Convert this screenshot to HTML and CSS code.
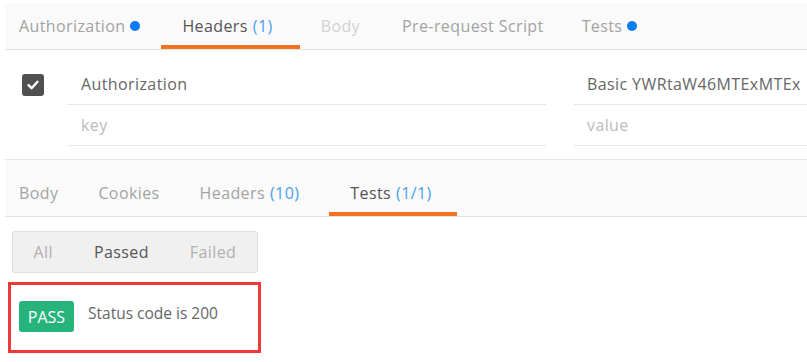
FILE: index.html
```html
<!DOCTYPE html>
<html lang="en">
<head>
  <meta charset="UTF-8" />
  <title>Request / Response Tests</title>
  <link rel="stylesheet" href="styles.css">
</head>
<body>
  <!-- request tabs -->
  <div class="tabbar request-tabs">
    <div class="tab">Authorization <span class="dot"></span></div>
    <div class="tab active">Headers <span class="count">(1)</span></div>
    <div class="tab disabled">Body</div>
    <div class="tab">Pre-request Script</div>
    <div class="tab">Tests <span class="dot"></span></div>
  </div>

  <div class="header-rows">
    <div class="row">
      <div class="check-cell"><span class="checkbox">
        <svg width="14" height="14" viewBox="0 0 14 14"><path d="M2.5 7.2 L5.6 10.2 L11.5 3.8" fill="none" stroke="#fff" stroke-width="2.4" stroke-linecap="round" stroke-linejoin="round"/></svg>
      </span></div>
      <div class="cell key">Authorization</div>
      <div class="spacer"></div>
      <div class="cell value">Basic YWRtaW46MTExMTEx</div>
    </div>
    <div class="row">
      <div class="check-cell"></div>
      <div class="cell key placeholder">key</div>
      <div class="spacer"></div>
      <div class="cell value placeholder">value</div>
    </div>
  </div>

  <!-- response tabs -->
  <div class="tabbar response-tabs">
    <div class="tab">Body</div>
    <div class="tab">Cookies</div>
    <div class="tab">Headers <span class="count">(10)</span></div>
    <div class="tab active">Tests <span class="count">(1/1)</span></div>
  </div>

  <div class="filters">
    <span class="filter">All</span>
    <span class="filter selected">Passed</span>
    <span class="filter">Failed</span>
  </div>

  <div class="results">
    <div class="result">
      <span class="badge">PASS</span>
      <span class="result-name">Status code is 200</span>
    </div>
  </div>
</body>
</html>
```

FILE: styles.css
```css
body {
  margin: 0;
  font-family: 'Open Sans', 'Noto Sans', sans-serif;
  font-size: 16px;
  letter-spacing: 0.4px;
  color: #505050;
  background: #ffffff;
}
.tabbar {
  display: flex;
  margin-left: 5px;
  background: #fafafa;
  border-bottom: 1px solid #e2e2e2;
}
.request-tabs {
  margin-top: 3px;
  height: 46px;
}
.response-tabs {
  height: 46px;
  padding-top: 10px;
  border-top: 1px solid #e6e6e6;
  margin-top: 13px;
}
.tab {
  position: relative;
  display: flex;
  align-items: center;
  gap: 5px;
  padding: 0 21px;
  color: #a3a3a3;
  white-space: nowrap;
}
.request-tabs .tab:first-child {
  padding-left: 14px;
}
.request-tabs .tab.active {
  padding-right: 27px;
}
.request-tabs .tab:last-child {
  margin-left: -4px;
}
.response-tabs .tab {
  padding: 0 20px;
}
.response-tabs .tab:first-child {
  padding-left: 14px;
}
.response-tabs .tab.active {
  margin-left: 10px;
  padding: 0 25px 0 21px;
}
.tab.active {
  color: #555555;
}
.tab.active::after {
  content: "";
  position: absolute;
  left: 0;
  right: 0;
  bottom: 0;
  height: 4px;
  background: #f47023;
}
.tab.disabled {
  color: #d2d2d2;
}
.count {
  color: #4a9ef2;
}
.dot {
  width: 10px;
  height: 10px;
  border-radius: 50%;
  background: #0d7cf0;
}

.header-rows {
  padding-top: 14px;
}
.row {
  display: flex;
  height: 41px;
}
.check-cell {
  width: 67px;
  display: flex;
  align-items: center;
  padding-left: 22px;
  box-sizing: border-box;
}
.checkbox {
  width: 22px;
  height: 22px;
  border-radius: 3px;
  background: #505050;
  display: flex;
  align-items: center;
  justify-content: center;
}
.cell {
  display: flex;
  align-items: center;
  border-bottom: 1px solid #e8e8e8;
  color: #666666;
}
.cell.key {
  width: 479px;
  padding-left: 14px;
  box-sizing: border-box;
}
.spacer {
  width: 28px;
}
.cell.value {
  flex: 1;
  padding-left: 13px;
  white-space: nowrap;
  overflow: hidden;
}
.placeholder {
  color: #bbbbbb;
}

.filters {
  display: inline-flex;
  margin: 14px 0 0 12px;
  height: 40px;
  align-items: center;
  background: #f0f0f0;
  border: 1px solid #dcdcdc;
  border-radius: 3px;
}
.filter {
  padding: 0 20.5px;
  color: #b0b0b0;
}
.filter.selected {
  color: #555555;
}

.results {
  width: 253px;
  margin: 9px 0 0 8px;
  border: 3px solid #ef3a3a;
  box-sizing: border-box;
  padding: 16px 8px 18px;
  letter-spacing: 0;
}
.result {
  display: flex;
  align-items: center;
  gap: 14px;
}
.badge {
  width: 55px;
  height: 31px;
  display: flex;
  align-items: center;
  justify-content: center;
  background: #27b47c;
  color: #ffffff;
  border-radius: 3px;
}
.result-name {
  color: #666666;
  font-size: 15.5px;
  margin-top: -8px;
}
```
